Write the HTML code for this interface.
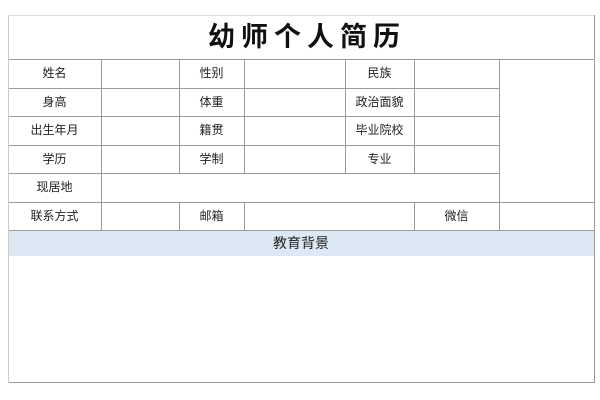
<!DOCTYPE html>
<html><head><meta charset="utf-8"><style>
body{margin:0;width:600px;height:400px;background:#fff;position:relative;overflow:hidden;font-family:"Liberation Sans","Noto Sans CJK SC",sans-serif}
.h{position:absolute;height:1px;background:#9a9a9a}
.v{position:absolute;width:1px;background:#9a9a9a}
.t{position:absolute;font-size:12px;color:#222;text-align:center;line-height:29px;height:28px}
</style></head><body>
<div style="position:absolute;left:8px;top:230px;width:586px;height:26px;background:#dce9f5"></div>
<div style="position:absolute;left:14px;top:15px;width:586px;height:45px;text-align:center;font-size:27px;font-weight:bold;line-height:45px;letter-spacing:6px;color:#111">幼师个人简历</div>
<div class="h" style="left:8px;top:15px;width:586px;background:#ddd"></div>
<div class="h" style="left:8px;top:59px;width:587px"></div>
<div class="h" style="left:8px;top:88px;width:491px"></div>
<div class="h" style="left:8px;top:116px;width:491px"></div>
<div class="h" style="left:8px;top:145px;width:491px"></div>
<div class="h" style="left:8px;top:173px;width:491px"></div>
<div class="h" style="left:8px;top:202px;width:587px"></div>
<div class="h" style="left:8px;top:230px;width:587px"></div>
<div class="h" style="left:8px;top:382px;width:587px"></div>
<div class="v" style="left:8px;top:15px;height:368px;background:#ccc"></div>
<div class="v" style="left:594px;top:15px;height:368px"></div>
<div class="v" style="left:101px;top:59px;height:171px"></div>
<div class="v" style="left:179px;top:59px;height:115px"></div>
<div class="v" style="left:179px;top:202px;height:28px"></div>
<div class="v" style="left:244px;top:59px;height:115px"></div>
<div class="v" style="left:244px;top:202px;height:28px"></div>
<div class="v" style="left:345px;top:59px;height:115px"></div>
<div class="v" style="left:414px;top:59px;height:115px"></div>
<div class="v" style="left:414px;top:202px;height:28px"></div>
<div class="v" style="left:499px;top:59px;height:171px"></div>

<div class="t" style="left:8px;top:59px;width:93px">姓名</div>
<div class="t" style="left:179px;top:59px;width:65px">性别</div>
<div class="t" style="left:345px;top:59px;width:69px">民族</div>
<div class="t" style="left:8px;top:88px;width:93px">身高</div>
<div class="t" style="left:179px;top:88px;width:65px">体重</div>
<div class="t" style="left:345px;top:88px;width:69px">政治面貌</div>
<div class="t" style="left:8px;top:116px;width:93px">出生年月</div>
<div class="t" style="left:179px;top:116px;width:65px">籍贯</div>
<div class="t" style="left:345px;top:116px;width:69px">毕业院校</div>
<div class="t" style="left:8px;top:145px;width:93px">学历</div>
<div class="t" style="left:179px;top:145px;width:65px">学制</div>
<div class="t" style="left:345px;top:145px;width:69px">专业</div>
<div class="t" style="left:8px;top:173px;width:93px">现居地</div>
<div class="t" style="left:8px;top:202px;width:93px">联系方式</div>
<div class="t" style="left:179px;top:202px;width:65px">邮箱</div>
<div class="t" style="left:414px;top:202px;width:85px">微信</div>
<div class="t" style="left:8px;top:230px;width:586px;font-size:14px;line-height:26px">教育背景</div>
</body></html>
